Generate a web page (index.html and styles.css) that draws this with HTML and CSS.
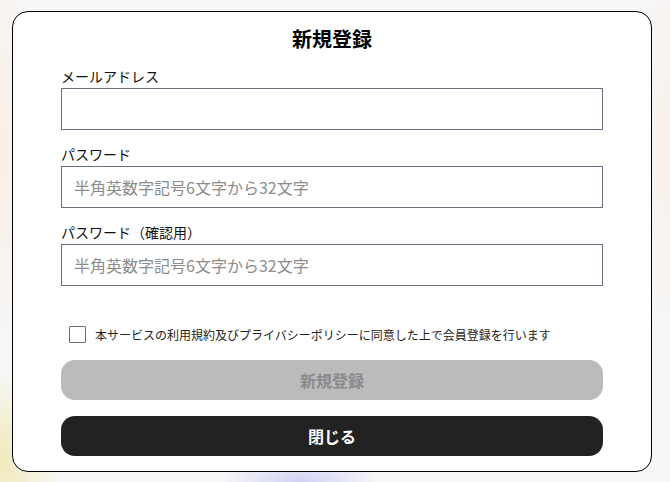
FILE: index.html
```html
<!DOCTYPE html>
<html lang="ja">
<head>
<meta charset="utf-8">
<title>新規登録</title>
<link rel="stylesheet" href="styles.css">
</head>
<body>
<div class="modal">
  <h1 class="title">新規登録</h1>
  <form class="form">
    <div class="field">
      <label class="label">メールアドレス</label>
      <input class="input" type="email">
    </div>
    <div class="field">
      <label class="label">パスワード</label>
      <input class="input" type="password" placeholder="半角英数字記号6文字から32文字">
    </div>
    <div class="field">
      <label class="label">パスワード（確認用）</label>
      <input class="input" type="password" placeholder="半角英数字記号6文字から32文字">
    </div>
    <label class="agree">
      <span class="checkbox"></span>
      <span class="agree-text">本サービスの利用規約及びプライバシーポリシーに同意した上で会員登録を行います</span>
    </label>
    <button class="btn btn-disabled" type="button">新規登録</button>
    <button class="btn btn-dark" type="button">閉じる</button>
  </form>
</div>
</body>
</html>
```

FILE: styles.css
```css
html, body {
  margin: 0;
  padding: 0;
}
body {
  width: 670px;
  height: 482px;
  overflow: hidden;
  font-family: "Noto Sans CJK JP", "Noto Sans", sans-serif;
  color: #111;
  background:
    radial-gradient(ellipse 60px 90px at 0px 460px, rgba(240, 232, 180, 0.9), rgba(240, 232, 180, 0) 100%),
    radial-gradient(ellipse 80px 30px at 300px 482px, rgba(200, 200, 245, 0.8), rgba(200, 200, 245, 0) 100%),
    radial-gradient(ellipse 40px 200px at 0px 150px, rgba(250, 236, 225, 0.8), rgba(250, 236, 225, 0) 100%),
    radial-gradient(ellipse 40px 200px at 670px 150px, rgba(250, 236, 225, 0.6), rgba(250, 236, 225, 0) 100%),
    #f7f7f7;
}
.modal {
  box-sizing: border-box;
  width: 640px;
  height: 461px;
  margin: 11px 0 0 12px;
  background: #fff;
  border: 1px solid #000;
  border-radius: 16px;
  padding: 13px 48px 0;
  display: flex;
  flex-direction: column;
}
.title {
  margin: 0;
  text-align: center;
  font-size: 20px;
  line-height: 28px;
  font-weight: 700;
  color: #000;
}
.form {
  margin-top: 13px;
  display: flex;
  flex-direction: column;
}
.field {
  display: flex;
  flex-direction: column;
  gap: 2px;
  margin-bottom: 14px;
}
.label {
  font-size: 14px;
  line-height: 20px;
  font-weight: 400;
  color: #111;
}
.input {
  box-sizing: border-box;
  width: 542px;
  height: 42px;
  margin: 0;
  border: 1px solid #6b7080;
  border-radius: 0;
  padding: 0 12px;
  font-family: "Noto Sans CJK JP", "Noto Sans", sans-serif;
  font-size: 16px;
  color: #111;
  background: #fff;
  outline: none;
}
.input::placeholder {
  color: #8c8c8c;
}
.agree {
  display: flex;
  align-items: center;
  margin: 26px 0 0 8px;
  height: 17px;
}
.checkbox {
  box-sizing: border-box;
  width: 17px;
  height: 17px;
  border: 1px solid #6b7080;
  border-radius: 1px;
  background: #fff;
  flex: none;
}
.agree-text {
  margin-left: 9px;
  font-size: 12px;
  line-height: 17px;
  color: #222;
}
.btn {
  box-sizing: border-box;
  width: 542px;
  height: 40px;
  border: none;
  border-radius: 14px;
  font-family: "Noto Sans CJK JP", "Noto Sans", sans-serif;
  font-size: 16px;
  font-weight: 700;
  padding: 0;
  margin: 0;
}
.btn-disabled {
  margin-top: 17px;
  background: #bbbbbb;
  color: #8a8a8a;
}
.btn-dark {
  margin-top: 16px;
  background: #222222;
  color: #fff;
}
```
